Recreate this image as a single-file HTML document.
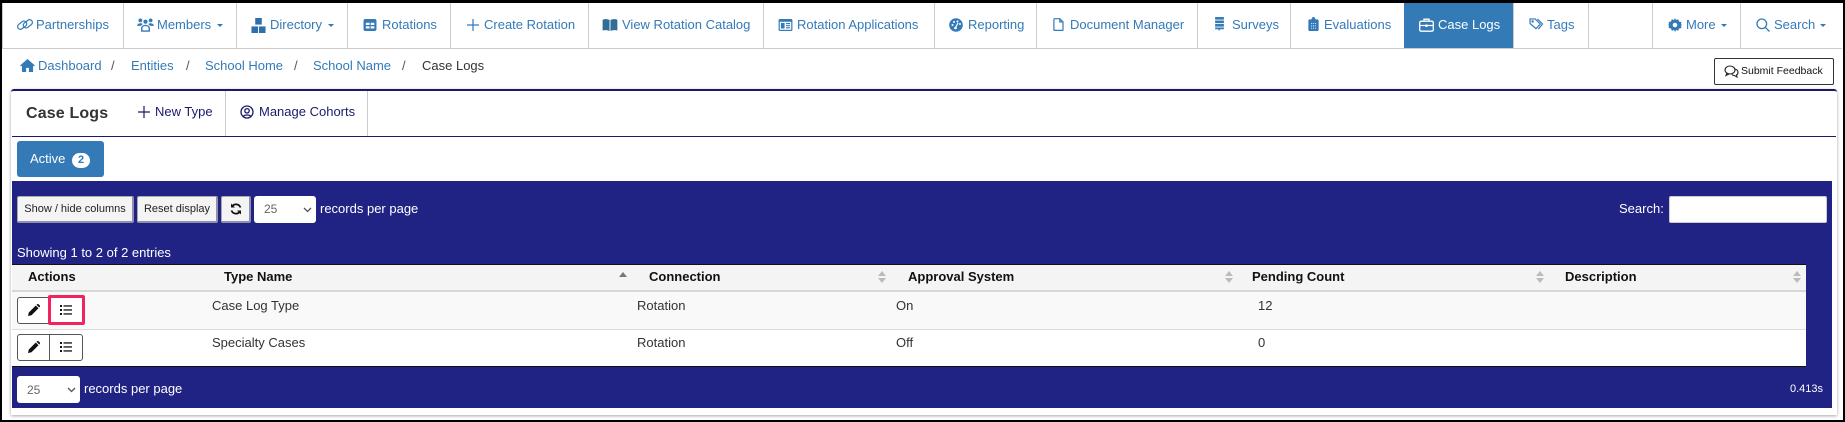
<!DOCTYPE html>
<html><head><meta charset="utf-8"><title>Case Logs</title>
<style>
*{box-sizing:border-box}
html,body{margin:0;padding:0;width:1845px;height:422px;overflow:hidden;background:#fff}
body{position:relative;font-family:"Liberation Sans",sans-serif;font-size:13px;color:#333}
.a{position:absolute}
.t{position:absolute;white-space:nowrap;line-height:16px;height:16px}
.l{color:#337ab7}
.w{color:#fff}
.d{color:#1b1a6b}
.b{font-weight:bold;color:#111}
.v{position:absolute;top:3px;height:45px;width:1px;background:#ccc}
svg{position:absolute;display:block}
.caret{position:absolute;top:24px;width:0;height:0;border-left:3px solid transparent;border-right:3px solid transparent;border-top:3px solid #337ab7}
.btn{position:absolute;top:196px;height:27px;background:#f4f4f4;border:1px solid #aaa;border-right:2px solid #8f8fae;border-bottom:2px solid #8f8fae;border-radius:2px;font-size:11px;color:#222;text-align:center;line-height:25px;white-space:nowrap}
.sel{position:absolute;background:#fff;border-radius:3px;color:#666;font-size:12px;padding-left:10px;white-space:nowrap}
.sort{position:absolute;width:0;height:0;border-left:4px solid transparent;border-right:4px solid transparent}
.up{border-bottom:5px solid #bbb}
.dn{border-top:5px solid #bbb}
</style></head><body>
<!-- panel -->
<div class="a" style="left:11px;top:89px;width:1826px;height:326px;background:#fff;border-top:2px solid #1a1a66;border-radius:3px 3px 0 0;box-shadow:0 1px 3px rgba(0,0,0,.35)"></div>
<div class="a" style="left:12px;top:136px;width:1824px;height:1px;background:#1a1a66"></div>
<div class="a" style="left:225px;top:91px;width:1px;height:45px;background:#ccc"></div>
<div class="a" style="left:367px;top:91px;width:1px;height:45px;background:#ccc"></div>
<span class="t" style="left:26px;top:106px;font-size:16px;font-weight:bold;color:#333;letter-spacing:.15px">Case Logs</span>
<svg style="left:138px;top:106px" width="12" height="12" viewBox="0 0 12 12" stroke="#1b1a6b" stroke-width="1.200"><path d="M6 0v12M0 6h12"/></svg>
<span class="t d" style="left:155px;top:104px">New Type</span>
<svg style="left:240px;top:105px" width="14" height="14" viewBox="0 0 14 14" fill="none" stroke="#1b1a6b" stroke-width="1.300"><circle cx="7" cy="7" r="6"/><circle cx="7" cy="5.800" r="2.200"/><path d="M3.200 11.500C4 9.500 10 9.500 10.800 11.500"/></svg>
<span class="t d" style="left:259px;top:104px">Manage Cohorts</span>

<div class="a" style="left:17px;top:141px;width:87px;height:36px;background:#337ab7;border-radius:3px"></div>
<span class="t w" style="left:30px;top:151px">Active</span>
<div class="a" style="left:72px;top:153px;width:18px;height:15px;background:#fff;border-radius:8px;color:#337ab7;font-size:11px;font-weight:bold;text-align:center;line-height:15px">2</div>

<!-- black frame -->
<div class="a" style="left:0;top:0;width:1845px;height:3px;background:#000"></div>
<div class="a" style="left:0;top:0;width:2px;height:422px;background:#000"></div>
<div class="a" style="right:0;top:0;width:2px;height:422px;background:#000"></div>
<div class="a" style="left:0;top:420px;width:1845px;height:2px;background:#000"></div>

<!-- navbar -->
<div class="a" style="left:2px;top:48px;width:1840px;height:1px;background:#ccc"></div>
<div class="a" style="left:1404px;top:3px;width:110px;height:45px;background:#337ab7"></div>
<div class="v" style="left:2px"></div><div class="v" style="left:123px"></div><div class="v" style="left:236px"></div><div class="v" style="left:347px"></div><div class="v" style="left:450px"></div><div class="v" style="left:588px"></div><div class="v" style="left:763px"></div><div class="v" style="left:934px"></div><div class="v" style="left:1036px"></div><div class="v" style="left:1197px"></div><div class="v" style="left:1290px"></div><div class="v" style="left:1513px"></div><div class="v" style="left:1588px"></div><div class="v" style="left:1652px"></div><div class="v" style="left:1740px"></div>

<span class="t l" style="left:36px;top:17px">Partnerships</span>
<span class="t l" style="left:157px;top:17px">Members</span><i class="caret" style="left:217px"></i>
<span class="t l" style="left:270px;top:17px">Directory</span><i class="caret" style="left:328px"></i>
<span class="t l" style="left:382px;top:17px">Rotations</span>
<span class="t l" style="left:484px;top:17px">Create Rotation</span>
<span class="t l" style="left:622px;top:17px">View Rotation Catalog</span>
<span class="t l" style="left:797px;top:17px">Rotation Applications</span>
<span class="t l" style="left:968px;top:17px">Reporting</span>
<span class="t l" style="left:1070px;top:17px">Document Manager</span>
<span class="t l" style="left:1232px;top:17px">Surveys</span>
<span class="t l" style="left:1324px;top:17px">Evaluations</span>
<span class="t w" style="left:1438px;top:17px">Case Logs</span>
<span class="t l" style="left:1547px;top:17px">Tags</span>
<span class="t l" style="left:1686px;top:17px">More</span><i class="caret" style="left:1721px"></i>
<span class="t l" style="left:1774px;top:17px">Search</span><i class="caret" style="left:1820px"></i>

<!-- nav icons -->
<svg style="left:17px;top:18px" width="16" height="13" viewBox="0 0 16 13" fill="none" stroke="#337ab7" stroke-width="1.200"><rect x="0" y="4.500" width="10" height="5.500" rx="2.700" transform="rotate(-38 5 7)"/><rect x="6" y="3" width="10" height="5.500" rx="2.700" transform="rotate(-38 11 6)"/></svg>
<svg style="left:137px;top:18px" width="17" height="14" viewBox="0 0 18 15" fill="#337ab7"><circle cx="3.500" cy="2.500" r="2"/><circle cx="14.500" cy="2.500" r="2"/><circle cx="9" cy="4" r="2.200"/><path d="M0 8.500C0 5.500 5 5 6 6.500L4 8.500H0zM18 8.500C18 5.500 13 5 12 6.500l2 2h4z"/><path d="M5 14v-3c0-2 2-3 4-3s4 1 4 3v3z" fill="none" stroke="#337ab7" stroke-width="1.500"/></svg>
<svg style="left:251px;top:18px" width="15" height="15" viewBox="0 0 16 16" fill="#2f70aa"><rect x="4.500" y="0" width="7" height="7"/><rect x="0.500" y="9" width="7" height="7"/><rect x="8.500" y="9" width="7" height="7"/></svg>
<svg style="left:363px;top:19px" width="14" height="12" viewBox="0 0 14 13"><rect width="14" height="13" rx="2" fill="#337ab7"/><path d="M2.500 4h4v2.500h-4zM7.700 4h4v2.500h-4zM2.500 7.800h4v2.500h-4zM7.700 7.800h4v2.500h-4z" fill="#fff"/></svg>
<svg style="left:467px;top:19px" width="12" height="12" viewBox="0 0 12 12" stroke="#337ab7" stroke-width="1.200"><path d="M6 0v12M0 6h12"/></svg>
<svg style="left:602px;top:19px" width="16" height="12" viewBox="0 0 16 13" fill="#2f6f96"><path d="M0 1C2-.2 5 0 7.500 1v12C5 12 2 11.800 0 12.500zM16 1C14-.2 11 0 8.500 1v12c2.500-1 5.500-1.200 7.500-.5z"/></svg>
<svg style="left:778px;top:19px" width="15" height="12" viewBox="0 0 15 13"><rect width="15" height="13" rx="1.500" fill="#337ab7"/><rect x="1.300" y="3" width="12.400" height="8.700" fill="#fff"/><rect x="2.500" y="4.300" width="4" height="6" fill="#337ab7"/><path d="M8 5h4.500M8 7.300h4.500M8 9.500h4.500" stroke="#337ab7" stroke-width="1.200"/></svg>
<svg style="left:949px;top:18px" width="14" height="14" viewBox="0 0 14 14"><circle cx="7" cy="7" r="6.800" fill="#337ab7"/><circle cx="3.500" cy="7" r="1" fill="#fff"/><circle cx="5" cy="4" r="1" fill="#fff"/><circle cx="8.500" cy="3.500" r="1" fill="#fff"/><circle cx="11" cy="6" r="1" fill="#fff"/><path d="M9 5L6.500 9.500" stroke="#fff" stroke-width="1.200"/><circle cx="6.500" cy="10" r="1.300" fill="#fff"/></svg>
<svg style="left:1053px;top:18px" width="11" height="13" viewBox="0 0 12 15" fill="none" stroke="#337ab7" stroke-width="1.400"><path d="M1.500.8h6l3.700 3.700v9a.8.800 0 0 1-.8.800h-8.900a.8.800 0 0 1-.8-.8V1.600a.8.800 0 0 1 .8-.8zM7.500 1v3.500h3.500"/></svg>
<svg style="left:1214px;top:17px" width="11" height="14" viewBox="0 0 12 16" fill="#337ab7"><rect x="1" y="0" width="10" height="3"/><rect x="1" y="4" width="10" height="3"/><rect x="1" y="8" width="10" height="3"/><path d="M1 12h10v2H7l-2 2v-2H1z"/></svg>
<svg style="left:1308px;top:17px" width="11" height="14" viewBox="0 0 11 15"><path d="M1.500 2.500H3.500C3.500 1 4.500 0 5.500 0S7.500 1 7.500 2.500h2A1.500 1.500 0 0 1 11 4v9.500A1.500 1.500 0 0 1 9.500 15h-8A1.500 1.500 0 0 1 0 13.500V4a1.500 1.500 0 0 1 1.500-1.500z" fill="#337ab7"/><path d="M3 7h5M3 9.500h5M3 12h5" stroke="#fff" stroke-width="1" stroke-dasharray="1 1"/></svg>
<svg style="left:1419px;top:18px" width="15" height="14" viewBox="0 0 15 14" fill="none" stroke="#fff" stroke-width="1.300"><rect x=".7" y="3.200" width="13.600" height="10" rx="1.500"/><path d="M5 3V1.200h5V3M.7 7.500h13.600"/><path d="M7.500 6.500v2.500" stroke-width="2"/></svg>
<svg style="left:1529px;top:18px" width="15" height="12" viewBox="0 0 16 13" fill="none" stroke="#337ab7" stroke-width="1.300"><path d="M1 1h5.500L12 6.500 7.500 11.500 1 6z"/><path d="M9 1l5.500 5.500L10 12"/><circle cx="3.800" cy="3.800" r=".7" fill="#337ab7"/></svg>
<svg style="left:1668px;top:18px" width="14" height="14" viewBox="0 0 14 14"><path d="M7 0l1 2 2.200-.8 .8 2.300L13.400 4 13 6.200 14 7l-1 .8.400 2.200-2.400.500-.8 2.300L8 12l-1 2-1-2-2.200.800-.8-2.300L.6 10 1 7.800 0 7l1-.8L.6 4 3 3.500l.8-2.300L6 2z" fill="#337ab7"/><circle cx="7" cy="7" r="2.300" fill="#fff"/></svg>
<svg style="left:1756px;top:18px" width="14" height="14" viewBox="0 0 14 14" fill="none" stroke="#337ab7" stroke-width="1.300"><circle cx="5.800" cy="5.800" r="4.800"/><path d="M9.300 9.300L13.500 13.500"/></svg>

<!-- breadcrumb -->
<svg style="left:20px;top:59px" width="15" height="13" viewBox="0 0 16 14" fill="#337ab7"><path d="M8 0L0 7l1 1 1-.8V14h4.500V9.500h3V14H14V7.200l1 .8 1-1z"/></svg>
<span class="t l" style="left:38px;top:58px">Dashboard</span>
<span class="t" style="left:111px;top:58px;color:#555">/</span>
<span class="t l" style="left:131px;top:58px">Entities</span>
<span class="t" style="left:186px;top:58px;color:#555">/</span>
<span class="t l" style="left:205px;top:58px">School Home</span>
<span class="t" style="left:294px;top:58px;color:#555">/</span>
<span class="t l" style="left:313px;top:58px">School Name</span>
<span class="t" style="left:402px;top:58px;color:#555">/</span>
<span class="t" style="left:422px;top:58px">Case Logs</span>

<div class="a" style="left:1714px;top:58px;width:120px;height:27px;border:1px solid #333;border-radius:2px;background:#fff"></div>
<svg style="left:1724px;top:65px" width="15" height="13" viewBox="0 0 15 13" fill="none" stroke="#222" stroke-width="1.100"><ellipse cx="6" cy="5" rx="5" ry="4"/><path d="M3 8L2 10.500 5 9"/><path d="M11 4c2 .5 3 2 3 3.500 0 1-.5 2-1.500 2.500l.5 2-2.500-1.500c-1 0-2-.3-2.500-1"/></svg>
<span class="t" style="left:1741px;top:63px;font-size:10.500px;color:#111">Submit Feedback</span>

<!-- navy block -->
<div class="a" style="left:12px;top:181px;width:1820px;height:227px;background:#202384"></div>
<div class="btn" style="left:17px;width:117px">Show / hide columns</div>
<div class="btn" style="left:137px;width:81px">Reset display</div>
<div class="btn" style="left:221px;width:30px"></div>
<svg style="left:230px;top:203px" width="12" height="12" viewBox="0 0 12 12" fill="none" stroke="#111" stroke-width="1.800"><path d="M10.500 4.500A4.800 4.800 0 0 0 2 3.500M1.500 7.500A4.800 4.800 0 0 0 10 8.500"/><path d="M1 .5v4h4zM11 11.500v-4H7z" fill="#111" stroke="none"/></svg>
<div class="sel" style="left:254px;top:196px;width:62px;height:27px;line-height:27px">25</div>
<svg style="left:303px;top:207px" width="9" height="6" viewBox="0 0 9 6" fill="none" stroke="#555" stroke-width="1.300"><path d="M1 1l3.500 3.500L8 1"/></svg>
<span class="t w" style="left:320px;top:201px">records per page</span>
<span class="t w" style="left:1619px;top:201px">Search:</span>
<div class="a" style="left:1669px;top:196px;width:158px;height:27px;background:#fff;border:1px solid #ccc;border-radius:2px"></div>
<span class="t w" style="left:17px;top:245px">Showing 1 to 2 of 2 entries</span>

<!-- table -->
<div class="a" style="left:12px;top:264px;width:1794px;height:103px;background:#fff;border-top:1px solid #111;border-bottom:1px solid #111"></div>
<div class="a" style="left:12px;top:265px;width:1794px;height:26px;background:#f4f4f4"></div>
<div class="a" style="left:12px;top:290px;width:1794px;height:2px;background:#d8d8d8"></div>
<div class="a" style="left:12px;top:292px;width:1794px;height:37px;background:#f9f9f9"></div>
<div class="a" style="left:12px;top:329px;width:1794px;height:1px;background:#ddd"></div>

<span class="t b" style="left:28px;top:269px">Actions</span>
<span class="t b" style="left:224px;top:269px">Type Name</span>
<span class="t b" style="left:649px;top:269px">Connection</span>
<span class="t b" style="left:908px;top:269px">Approval System</span>
<span class="t b" style="left:1252px;top:269px">Pending Count</span>
<span class="t b" style="left:1565px;top:269px">Description</span>

<i class="sort" style="left:619px;top:272px;border-bottom:5px solid #777"></i>
<i class="sort up" style="left:878px;top:271px"></i><i class="sort dn" style="left:878px;top:278px"></i>
<i class="sort up" style="left:1225px;top:271px"></i><i class="sort dn" style="left:1225px;top:278px"></i>
<i class="sort up" style="left:1536px;top:271px"></i><i class="sort dn" style="left:1536px;top:278px"></i>
<i class="sort up" style="left:1793px;top:271px"></i><i class="sort dn" style="left:1793px;top:278px"></i>

<span class="t" style="left:212px;top:298px">Case Log Type</span>
<span class="t" style="left:637px;top:298px">Rotation</span>
<span class="t" style="left:896px;top:298px">On</span>
<span class="t" style="left:1258px;top:298px">12</span>
<span class="t" style="left:212px;top:335px">Specialty Cases</span>
<span class="t" style="left:637px;top:335px">Rotation</span>
<span class="t" style="left:896px;top:335px">Off</span>
<span class="t" style="left:1258px;top:335px">0</span>

<!-- action buttons row 1 -->
<div class="a" style="left:17px;top:297px;width:33px;height:27px;background:#fff;border:1px solid #555;border-radius:3px 0 0 3px"></div>
<div class="a" style="left:48px;top:295px;width:37px;height:30px;background:#fff;border:3px solid #f3235f;border-radius:2px"></div>
<!-- row 2 -->
<div class="a" style="left:17px;top:334px;width:33px;height:27px;background:#fff;border:1px solid #555;border-radius:3px 0 0 3px"></div>
<div class="a" style="left:49px;top:334px;width:34px;height:27px;background:#fff;border:1px solid #555;border-left:1px solid #555;border-radius:0 3px 3px 0"></div>

<svg style="left:28px;top:304px" width="12" height="12" viewBox="0 0 12 12" fill="#111"><path d="M0 12l.8-3.500L7.800 1.500l2.700 2.700-7 7zM8.500.8l.7-.6a1 1 0 0 1 1.300 0l1.300 1.300a1 1 0 0 1 0 1.300l-.6.700z"/></svg>
<svg style="left:28px;top:341px" width="12" height="12" viewBox="0 0 12 12" fill="#111"><path d="M0 12l.8-3.500L7.800 1.500l2.700 2.700-7 7zM8.500.8l.7-.6a1 1 0 0 1 1.300 0l1.300 1.300a1 1 0 0 1 0 1.300l-.6.700z"/></svg>
<svg style="left:60px;top:305px" width="12" height="10" viewBox="0 0 12 10" fill="#111"><rect x="0" y="0" width="2" height="2"/><rect x="0" y="4" width="2" height="2"/><rect x="0" y="8" width="2" height="2"/><rect x="3.500" y=".3" width="8.500" height="1.300"/><rect x="3.500" y="4.300" width="8.500" height="1.300"/><rect x="3.500" y="8.300" width="8.500" height="1.300"/></svg>
<svg style="left:60px;top:342px" width="12" height="10" viewBox="0 0 12 10" fill="#111"><rect x="0" y="0" width="2" height="2"/><rect x="0" y="4" width="2" height="2"/><rect x="0" y="8" width="2" height="2"/><rect x="3.500" y=".3" width="8.500" height="1.300"/><rect x="3.500" y="4.300" width="8.500" height="1.300"/><rect x="3.500" y="8.300" width="8.500" height="1.300"/></svg>

<!-- footer -->
<div class="sel" style="left:17px;top:376px;width:63px;height:27px;line-height:28px">25</div>
<svg style="left:67px;top:387px" width="9" height="6" viewBox="0 0 9 6" fill="none" stroke="#555" stroke-width="1.300"><path d="M1 1l3.500 3.500L8 1"/></svg>
<span class="t w" style="left:84px;top:381px">records per page</span>
<span class="t w" style="left:1790px;top:381px;font-size:11px">0.413s</span>
</body></html>
